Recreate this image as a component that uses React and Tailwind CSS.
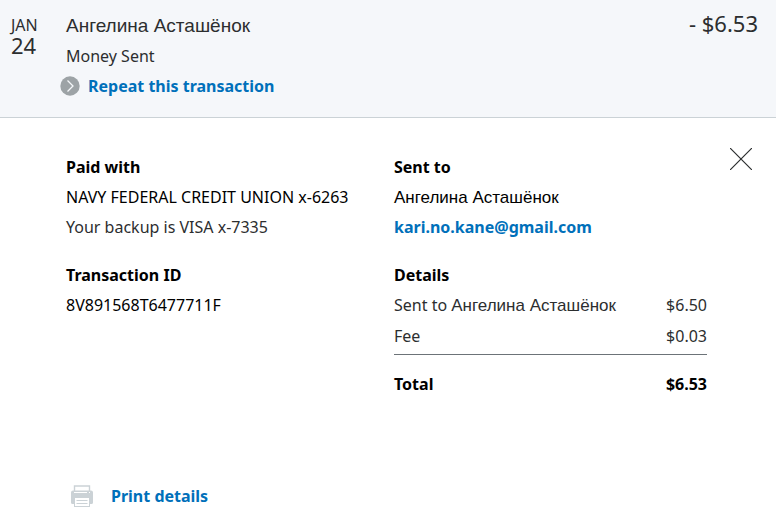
import React from 'react';

const TRANSACTION = {
  month: 'Jan',
  day: '24',
  name: 'Ангелина Асташёнок',
  type: 'Money Sent',
  amount: '- $6.53',
  source: 'NAVY FEDERAL CREDIT UNION x-6263',
  backup: 'Your backup is VISA x-7335',
  id: '8V891568T6477711F',
  email: 'kari.no.kane@gmail.com',
  sent: '$6.50',
  fee: '$0.03',
  total: '$6.53',
};

const ArrowIcon = () => (
  <svg className="w-5 h-5 shrink-0" viewBox="0 0 20 20" fill="none" aria-hidden="true">
    <circle cx="10" cy="10" r="9.7" fill="#9da3a6" />
    <path d="M7.5 4.500l5.500 5.500-5.500 5.500" stroke="#f5f7fa" strokeWidth="1.3" />
  </svg>
);

const CloseIcon = () => (
  <svg className="w-[22px] h-[22px]" viewBox="0 0 22 22" fill="none" stroke="#2c2e2f" strokeWidth="1.2" aria-hidden="true">
    <path d="M0 0l22 22M22 0L0 22" />
  </svg>
);

const PrinterIcon = () => (
  <svg className="w-[22px] h-[22px] shrink-0" viewBox="0 0 22 22" fill="none" aria-hidden="true">
    <path d="M3.500 6V1h15v5" stroke="#cbd2d6" strokeWidth="1.4" />
    <path d="M2 5.500h18a2 2 0 0 1 2 2v10a1.500 1.500 0 0 1-1.500 1.500H19v3H3v-3H1.500A1.500 1.500 0 0 1 0 17.500v-10a2 2 0 0 1 2-2z" fill="#cbd2d6" />
    <path d="M3 7.500h13M18 7.500h1" stroke="#fff" />
    <path d="M4 13h14v8H4z" fill="#fff" />
    <path d="M5.500 15.500h11M5.500 18.500h11" stroke="#cbd2d6" />
  </svg>
);

const Name = ({ children }) => (
  <span className="font-['Liberation_Sans',sans-serif] text-[17px] leading-none">{children}</span>
);

const App = () => {
  const t = TRANSACTION;

  return (
    <main className="min-h-screen bg-white font-['Noto_Sans',sans-serif] text-base leading-[30px] text-[#2c2e2f]">
      {/* Summary */}
      <header className="flex bg-[#f5f7fa] border-b border-[#cbd2d6] pt-[11px] pb-4 pl-[11px] pr-[18px]">
        <time className="w-[55px] shrink-0 flex flex-col items-start pt-1">
          <span className="uppercase leading-5">{t.month}</span>
          <span className="text-[22px] leading-5">{t.day}</span>
        </time>
        <div className="flex-1">
          <h1 className="font-['Liberation_Sans',sans-serif] text-[19px] leading-[30px]">{t.name}</h1>
          <p>{t.type}</p>
          <a href="#repeat" className="-ml-1.5 flex w-fit items-center gap-2 font-bold text-[#0070ba]">
            <ArrowIcon />
            Repeat this transaction
          </a>
        </div>
        <p className="text-[22px] leading-6">{t.amount}</p>
      </header>

      {/* Details */}
      <section className="flex items-start pt-[34px] pl-[66px] pr-6">
        <div className="flex-1 grid grid-cols-2 gap-x-[15px] gap-y-[18px]">
          <div>
            <h2 className="font-bold text-black">Paid with</h2>
            <p className="whitespace-nowrap text-black">{t.source}</p>
            <p>{t.backup}</p>
          </div>
          <div>
            <h2 className="font-bold text-black">Sent to</h2>
            <p className="text-black"><Name>{t.name}</Name></p>
            <a href="#email" className="block w-fit font-bold text-[#0070ba]">{t.email}</a>
          </div>
          <div>
            <h2 className="font-bold text-black">Transaction ID</h2>
            <p className="text-black">{t.id}</p>
          </div>
          <div>
            <h2 className="font-bold text-black">Details</h2>
            <table className="w-full border-collapse">
              <tbody>
                <tr>
                  <td className="p-0 whitespace-nowrap">Sent to <Name>{t.name}</Name></td>
                  <td className="p-0 text-right">{t.sent}</td>
                </tr>
                <tr className="border-b border-[#6c7378]">
                  <td className="p-0 pt-px pb-[3px]">Fee</td>
                  <td className="p-0 pt-px pb-[3px] text-right">{t.fee}</td>
                </tr>
                <tr className="font-bold text-black">
                  <td className="p-0 pt-[14px]">Total</td>
                  <td className="p-0 pt-[14px] text-right">{t.total}</td>
                </tr>
              </tbody>
            </table>
          </div>
        </div>
        <button type="button" aria-label="Close" className="ml-[23px] -mt-1 cursor-pointer">
          <CloseIcon />
        </button>
      </section>

      <footer className="pt-[82px] pb-5 pl-[71px]">
        <button type="button" className="flex items-center gap-[18px] font-bold text-[#0070ba] cursor-pointer">
          <PrinterIcon />
          Print details
        </button>
      </footer>
    </main>
  );
};

export default App;
